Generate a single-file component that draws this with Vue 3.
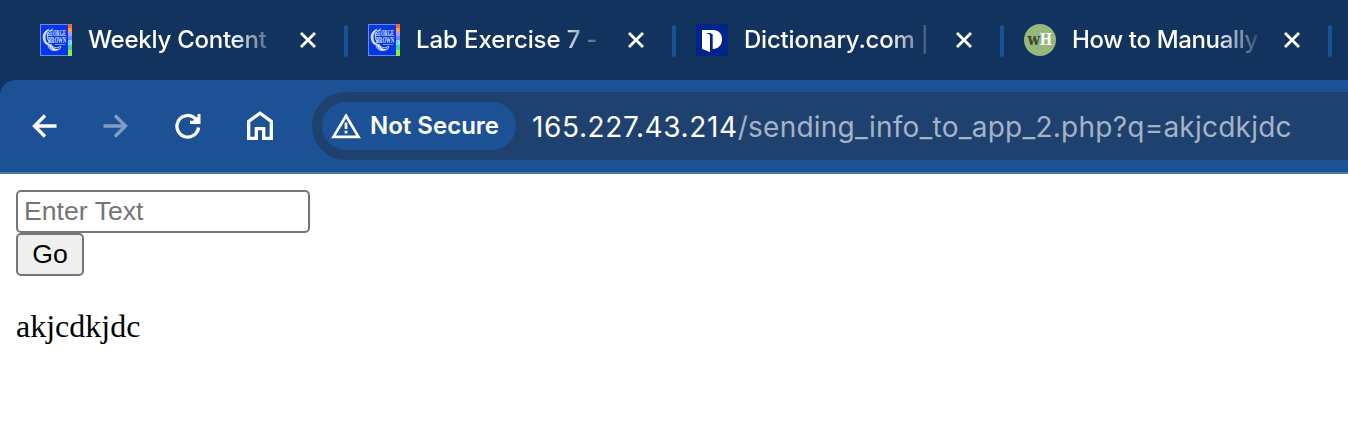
<script setup>
const tabs = [
  { title: 'Weekly Content', icon: 'college', cls: 't-weekly' },
  { title: 'Lab Exercise 7 -', icon: 'college', cls: 't-lab' },
  { title: 'Dictionary.com |', icon: 'dictionary', cls: 't-dict' },
  { title: 'How to Manually', icon: 'how', cls: 't-how' },
]
</script>

<template>
  <div class="browser">
    <div class="tabstrip">
      <div v-for="(tab, i) in tabs" :key="i" class="tab">
        <svg v-if="tab.icon === 'college'" class="favicon" viewBox="0 0 32 32">
          <rect width="32" height="32" fill="#668bed" />
          <rect x="1" y="1" width="27" height="30" fill="#0637e6" />
          <rect x="28" width="4" height="4" fill="#ff643b" />
          <rect x="28" y="4" width="4" height="4" fill="#ff9a4a" />
          <rect x="28" y="8" width="4" height="4" fill="#a99bed" />
          <rect x="28" y="12" width="4" height="4" fill="#7b83f4" />
          <rect x="28" y="16" width="4" height="5" fill="#65dcfa" />
          <rect x="28" y="21" width="4" height="5" fill="#55c9a0" />
          <rect x="28" y="26" width="4" height="6" fill="#8ff043" />
          <path d="M10 4.500C4.500 6 2 10 3 15.500c.6 3.500 3 5.500 6 6.500 2 5.500 8 5.500 12 2.500-5 1.500-8 0-9-3.500C7 19.500 5 16.500 5.500 12 6 8.500 7.500 6.500 10 4.500z" fill="#d3e0ff" />
          <path d="M13 4.500C6 8 6 15 10 18.500M11 20c1 4 6 5 10 2M8 22c2 6 10 6 13 1" fill="none" stroke="#c9d8ff" stroke-width="1" />
          <text x="6.500" y="12" class="gb" textLength="19.500" lengthAdjust="spacingAndGlyphs">GEORGE</text>
          <text x="8" y="18.500" class="gb" textLength="18" lengthAdjust="spacingAndGlyphs">BROWN</text>
          <path d="M15 20.500h10" stroke="#7898f5" stroke-width="1" />
        </svg>
        <svg v-else-if="tab.icon === 'dictionary'" class="favicon" viewBox="0 0 32 32">
          <rect width="32" height="32" fill="#00248b" />
          <path d="M6 6h11c6 0 9 4 9 9.500s-4 9.500-9 9.500h-3v3L6 25z" fill="#fff" />
          <path d="M9.500 9h4.500l2.700 1.200V28H14V11.500c0-1-2-2-4.500-2.500z" fill="#00248b" />
        </svg>
        <svg v-else class="favicon" viewBox="0 0 32 32">
          <circle cx="16" cy="16" r="16" fill="#97b77b" />
          <text x="3.500" y="20.800" class="wh dark" textLength="12.500" lengthAdjust="spacingAndGlyphs">w</text>
          <text x="15.700" y="20.800" class="wh" textLength="12.300" lengthAdjust="spacingAndGlyphs">H</text>
        </svg>
        <span class="title"><span :class="tab.cls">{{ tab.title }}</span></span>
        <svg class="close" viewBox="0 0 16 16"><path d="M1 1l14 14M15 1L1 15" /></svg>
        <i class="divider"></i>
      </div>
    </div>

    <div class="toolbar">
      <div class="nav">
        <svg viewBox="0 0 32 32"><path d="M28.500 16H6.500M17 5.500L6.500 16 17 26.500" /></svg>
        <svg viewBox="0 0 32 32" class="disabled"><path d="M3.500 16H25.500M15 5.500L25.500 16 15 26.500" /></svg>
        <svg viewBox="0 0 32 32"><path d="M26.500 17.500a10.800 10.800 0 1 1-3.200-9l2 2.500" /><path d="M28.500 4v10H18v-3.200h3l4.500-4V4z" class="solid" /></svg>
        <svg viewBox="0 0 32 32"><path d="M4.700 28.300V11.300L16 3.200l11.300 8.100v17h-7.600v-9.600h-7.400v9.600z" /></svg>
      </div>
      <div class="omnibox">
        <div class="chip">
          <svg viewBox="0 0 30 26"><path d="M15 2.800L27.500 23.800h-25z" /><path d="M15 9.500v6.500M15 17.800v2.800" /></svg>
          <span>Not Secure</span>
        </div>
        <div class="url"><span class="host">165.227.43.214</span><span class="path">/sending_info_to_app_2.php?q=akjcdkjdc</span></div>
      </div>
    </div>

    <main class="page">
      <form @submit.prevent>
        <input type="text" placeholder="Enter Text" />
        <button>Go</button>
      </form>
      <p>akjcdkjdc</p>
    </main>
  </div>
</template>

<style>
body { margin: 0; background: #fff; }
</style>

<style scoped>
.browser {
  width: 1348px;
  height: 440px;
  overflow: hidden;
  background: #fff;
  font-family: Inter, "Liberation Sans", sans-serif;
}
.tabstrip {
  display: flex;
  height: 80px;
  padding-left: 20px;
  background: #13335f;
}
.tab {
  display: flex;
  flex: none;
  align-items: center;
  box-sizing: border-box;
  width: 328px;
  height: 80px;
  padding-left: 20px;
}
.favicon { flex: none; width: 32px; height: 32px; }
.gb { font: bold 7.500px "Liberation Serif", serif; fill: #dce6ff; }
.wh { font: bold 16px "DejaVu Serif", serif; fill: #fff; }
.wh.dark { fill: #3c4a35; }
.title {
  flex: none;
  width: 192px;
  margin-left: 16px;
  white-space: pre;
  color: #fff;
  font-size: 24px;
  font-weight: 500;
  line-height: 32px;
  -webkit-mask-image: linear-gradient(to right, #000 144px, transparent 192px);
  mask-image: linear-gradient(to right, #000 144px, transparent 192px);
}
.t-weekly { letter-spacing: -0.25px; }
.t-lab { letter-spacing: -0.1px; }
.t-dict { letter-spacing: -0.2px; }
.t-how { letter-spacing: -0.35px; }
.close {
  flex: none;
  width: 16px;
  height: 16px;
  margin-left: 20px;
  fill: none;
  stroke: #fff;
  stroke-width: 2.8;
}
.divider {
  width: 4px;
  height: 32px;
  margin: 2px 0 0 28px;
  border-radius: 2px;
  background: #1d5196;
}
.toolbar {
  display: flex;
  align-items: center;
  box-sizing: border-box;
  height: 94px;
  border-bottom: 2px solid #4a77b0;
  background: radial-gradient(circle at 16px 16px, #1d5196 15.500px, #13335f 16.500px) 0 0 / 16px 16px no-repeat, #1d5196;
}
.nav { display: flex; gap: 40px; padding-left: 28px; }
.nav svg {
  width: 32px;
  height: 32px;
  fill: none;
  stroke: #fff;
  stroke-width: 3.300;
}
.nav .disabled { stroke: #829cc5; }
.nav .solid { fill: #fff; stroke: none; }
.omnibox {
  display: flex;
  flex: none;
  align-items: center;
  box-sizing: border-box;
  width: 1036px;
  height: 68px;
  margin-left: 36px;
  padding-left: 10px;
  border-radius: 34px 0 0 34px;
  background: #1f416f;
}
.chip {
  display: flex;
  align-items: center;
  box-sizing: border-box;
  width: 194px;
  height: 48px;
  padding-left: 9px;
  border-radius: 24px;
  background: #1d5196;
  color: #fff;
  font-size: 24px;
  font-weight: 600;
  white-space: nowrap;
}
.chip svg {
  flex: none;
  width: 30px;
  height: 26px;
  margin-right: 9px;
  fill: none;
  stroke: #fff;
  stroke-width: 2.700;
}
.chip span { padding-bottom: 2px; }
.url { margin-left: 16px; padding-top: 1px; font-size: 28px; line-height: 36px; white-space: nowrap; }
.host { color: #fff; letter-spacing: 0.62px; }
.path { color: #a5b3c6; letter-spacing: 0.24px; }
.page { padding: 16px; }
form { display: flex; flex-direction: column; align-items: flex-start; }
input, button {
  box-sizing: border-box;
  margin: 0;
  border: 2px solid #767676;
  border-radius: 5px;
  font: 26.667px "Liberation Sans", sans-serif;
}
input { width: 294px; height: 43px; padding: 0 6px; background: #fff; }
input::placeholder { color: #757575; opacity: 1; }
button { width: 68px; height: 43px; padding: 0; background: #efefef; color: #000; }
p { margin: 32px 0 0; color: #000; font: 32px/37px "Liberation Serif", serif; }
</style>
